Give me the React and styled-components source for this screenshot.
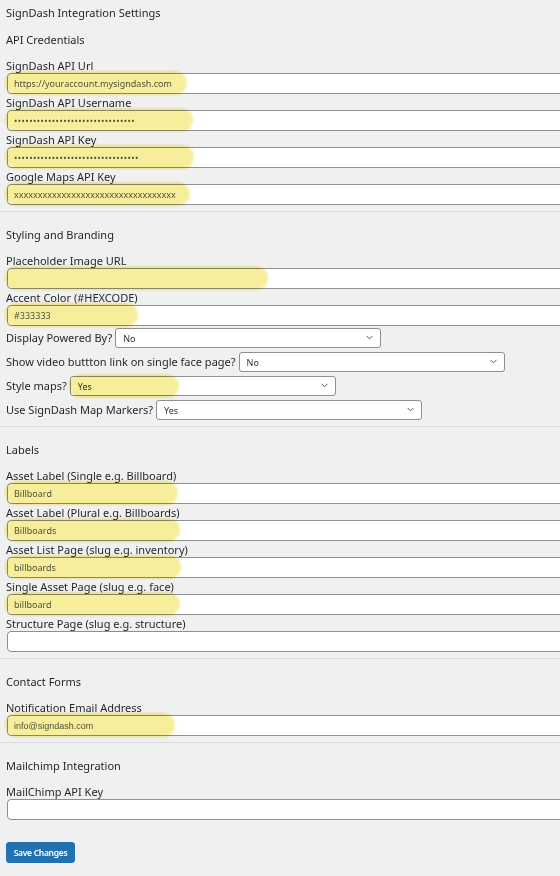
import React from 'react';
import styled, { createGlobalStyle } from 'styled-components';

const GlobalStyle = createGlobalStyle`
  html, body {
    margin: 0;
    padding: 0;
    background: #f0f0f1;
    overflow-x: hidden;
  }
  body {
    font-family: "Noto Sans", "Open Sans", sans-serif;
    color: #1d2327;
  }
`;

const Page = styled.form`
  padding: 4px 6px 20px 6px;
  font-size: 11px;
`;

const Title = styled.div`
  line-height: 17px;
  margin-bottom: 10px;
`;

const SectionHeading = styled.div`
  line-height: 17px;
  margin-bottom: 11px;
`;

const Divider = styled.hr`
  border: 0;
  border-top: 1px solid #dcdcde;
  margin: 6px -6px 14px -6px;
`;

const Field = styled.div`
  margin-bottom: 2px;
`;

const Label = styled.label`
  display: block;
  line-height: 14px;
`;

const InputWrap = styled.div`
  position: relative;
  margin-left: 1px;
`;

const TextInput = styled.input`
  display: block;
  box-sizing: border-box;
  width: calc(100% + 20px);
  height: 21px;
  padding: 0 6px;
  border: 1px solid #8c8f94;
  border-radius: 4px;
  background: #fff;
  font-family: ${(p) => (p.$arial ? '"Liberation Sans", Arial, sans-serif' : '"Noto Sans", sans-serif')};
  font-size: 9px;
  color: #50575e;
  outline: none;
  letter-spacing: ${(p) => (p.$dots ? '0.4px' : '0')};
`;

// yellow marker strokes drawn over the filled values
const Highlight = styled.span`
  position: absolute;
  left: ${(p) => p.$left ?? -2}px;
  top: -2px;
  width: ${(p) => p.$width}px;
  height: 24px;
  border-radius: 12px;
  background: #f7ee9c;
  mix-blend-mode: multiply;
  filter: blur(1px);
  pointer-events: none;
`;

const SelectRow = styled.div`
  display: flex;
  align-items: center;
  height: 20px;
  margin-bottom: 4px;
  line-height: 14px;
`;

const SelectWrap = styled.div`
  position: relative;
  margin-left: 3px;
  width: 266px;
  height: 20px;
`;

const Select = styled.select`
  appearance: none;
  box-sizing: border-box;
  width: 100%;
  height: 20px;
  padding: 0 20px 0 7px;
  border: 1px solid #8c8f94;
  border-radius: 3px;
  background: #fff;
  font-family: "Noto Sans", sans-serif;
  font-size: 9px;
  color: #2c3338;
  outline: none;
`;

const Chevron = styled.svg`
  position: absolute;
  right: 8px;
  top: 7px;
  width: 7px;
  height: 5px;
  pointer-events: none;
`;

const SaveButton = styled.button`
  margin-top: 20px;
  width: 69px;
  height: 21px;
  padding: 0;
  border: 1px solid #2271b1;
  border-radius: 3px;
  background: #2271b1;
  color: #fff;
  font-family: "Noto Sans", sans-serif;
  font-size: 8.5px;
  font-weight: 600;
  letter-spacing: -0.3px;
`;

const TextField = ({ label, value = '', type = 'text', mark, dots, arial }) => (
  <Field>
    <Label>{label}</Label>
    <InputWrap>
      <TextInput type={type} defaultValue={value} $dots={dots} $arial={arial} readOnly />
      {mark && <Highlight $width={mark} />}
    </InputWrap>
  </Field>
);

const SelectField = ({ label, value, mark }) => (
  <SelectRow>
    <span>{label}</span>
    <SelectWrap>
      <Select defaultValue={value}>
        <option>No</option>
        <option>Yes</option>
      </Select>
      <Chevron viewBox="0 0 7 5">
        <path d="M0.5 0.8 L3.5 3.8 L6.5 0.8" fill="none" stroke="#50575e" strokeWidth="1" />
      </Chevron>
      {mark && <Highlight $left={-1} $width={mark} />}
    </SelectWrap>
  </SelectRow>
);

const App = () => {
  return (
    <>
      <GlobalStyle />
      <Page onSubmit={(e) => e.preventDefault()}>
        <Title>SignDash Integration Settings</Title>

        <SectionHeading>API Credentials</SectionHeading>
        <TextField label="SignDash API Url" value="https://youraccount.mysigndash.com" mark={182} />
        <TextField label="SignDash API Username" type="password" value={'a'.repeat(32)} mark={188} dots />
        <TextField label="SignDash API Key" type="password" value={'a'.repeat(33)} mark={189} dots />
        <TextField label="Google Maps API Key" value={'x'.repeat(34)} mark={185} />
        <Divider />

        <SectionHeading>Styling and Branding</SectionHeading>
        <TextField label="Placeholder Image URL" mark={263} />
        <TextField label="Accent Color (#HEXCODE)" value="#333333" mark={133} />
        <SelectField label="Display Powered By?" value="No" />
        <SelectField label="Show video buttton link on single face page?" value="No" />
        <SelectField label="Style maps?" value="Yes" mark={110} />
        <SelectField label="Use SignDash Map Markers?" value="Yes" />
        <Divider />

        <SectionHeading>Labels</SectionHeading>
        <TextField label="Asset Label (Single e.g. Billboard)" value="Billboard" mark={173} />
        <TextField label="Asset Label (Plural e.g. Billboards)" value="Billboards" mark={175} />
        <TextField label="Asset List Page (slug e.g. inventory)" value="billboards" mark={176} />
        <TextField label="Single Asset Page (slug e.g. face)" value="billboard" mark={175} />
        <TextField label="Structure Page (slug e.g. structure)" />
        <Divider />

        <SectionHeading>Contact Forms</SectionHeading>
        <TextField label="Notification Email Address" value="info@signdash.com" mark={170} arial />
        <Divider />

        <SectionHeading>Mailchimp Integration</SectionHeading>
        <TextField label="MailChimp API Key" />

        <SaveButton type="submit">Save Changes</SaveButton>
      </Page>
    </>
  );
};

export default App;
